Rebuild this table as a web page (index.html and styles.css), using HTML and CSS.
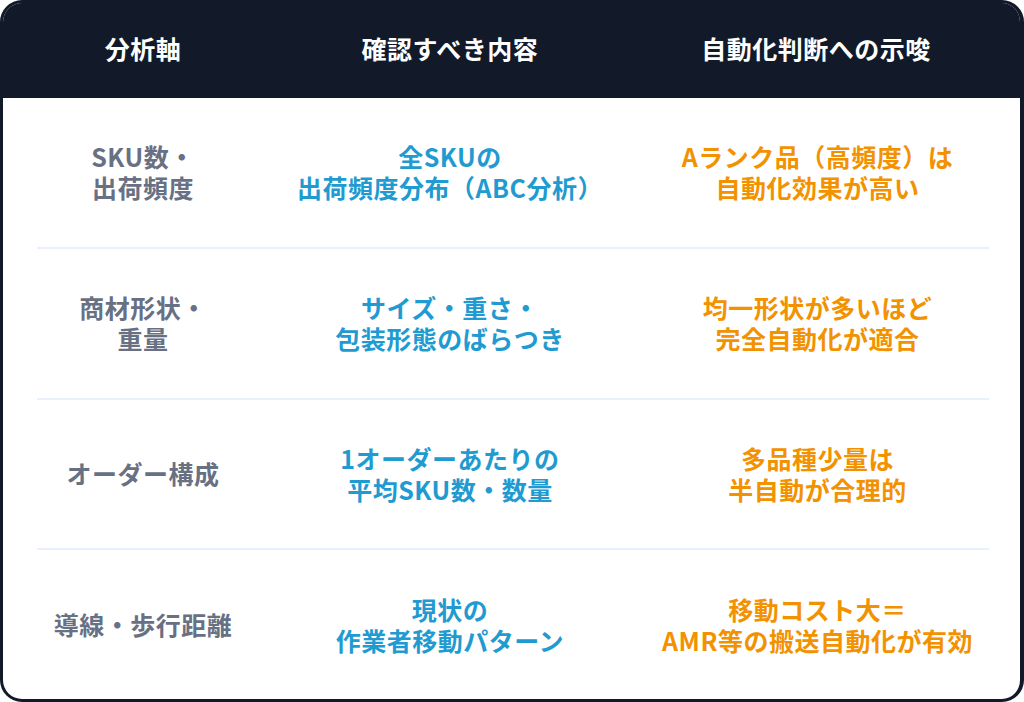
FILE: index.html
```html
<!DOCTYPE html>
<html lang="ja">
<head>
<meta charset="utf-8">
<link rel="stylesheet" href="styles.css">
</head>
<body>
<div class="table">
  <div class="head">
    <div class="cell">分析軸</div>
    <div class="cell">確認すべき内容</div>
    <div class="cell">自動化判断への示唆</div>
  </div>
  <div class="body">
    <div class="row">
      <div class="cell axis">SKU数・<br>出荷頻度</div>
      <div class="cell check">全SKUの<br>出荷頻度分布（ABC分析）</div>
      <div class="cell hint">Aランク品（高頻度）は<br>自動化効果が高い</div>
    </div>
    <div class="row">
      <div class="cell axis">商材形状・<br>重量</div>
      <div class="cell check">サイズ・重さ・<br>包装形態のばらつき</div>
      <div class="cell hint">均一形状が多いほど<br>完全自動化が適合</div>
    </div>
    <div class="row">
      <div class="cell axis">オーダー構成</div>
      <div class="cell check">1オーダーあたりの<br>平均SKU数・数量</div>
      <div class="cell hint">多品種少量は<br>半自動が合理的</div>
    </div>
    <div class="row last">
      <div class="cell axis">導線・歩行距離</div>
      <div class="cell check">現状の<br>作業者移動パターン</div>
      <div class="cell hint">移動コスト大＝<br>AMR等の搬送自動化が有効</div>
    </div>
  </div>
</div>
</body>
</html>
```

FILE: styles.css
```css
html, body {
  margin: 0;
  padding: 0;
  background: #ffffff;
}

body {
  font-family: "Noto Sans CJK JP", "Noto Sans", sans-serif;
  font-weight: 700;
}

.table {
  width: 1024px;
  height: 702px;
  box-sizing: border-box;
  border: 3px solid #121a2a;
  border-right-width: 4px;
  border-radius: 22px;
  overflow: hidden;
  display: flex;
  flex-direction: column;
  background: #ffffff;
}

.head {
  height: 95px;
  background: #121a2a;
  color: #ffffff;
  display: grid;
  grid-template-columns: 212px 402px 1fr;
  padding: 0 39px 0 34px;
  align-items: center;
  font-size: 25px;
  line-height: 32px;
  flex-shrink: 0;
}

.head .cell {
  margin-top: -6px;
}

.cell {
  text-align: center;
  letter-spacing: 0.02em;
}

.body {
  flex: 1;
  display: flex;
  flex-direction: column;
}

.row {
  flex: 1;
  margin: 0 31px 0 34px;
  padding-right: 5px;
  display: grid;
  grid-template-columns: 212px 402px 1fr;
  align-items: center;
  border-bottom: 2px solid #e8f1fb;
  font-size: 25px;
  line-height: 31px;
}

.row.last {
  border-bottom: none;
}

.axis {
  color: #687084;
}

.check {
  color: #1f9bd1;
}

.hint {
  color: #f39200;
}
```
